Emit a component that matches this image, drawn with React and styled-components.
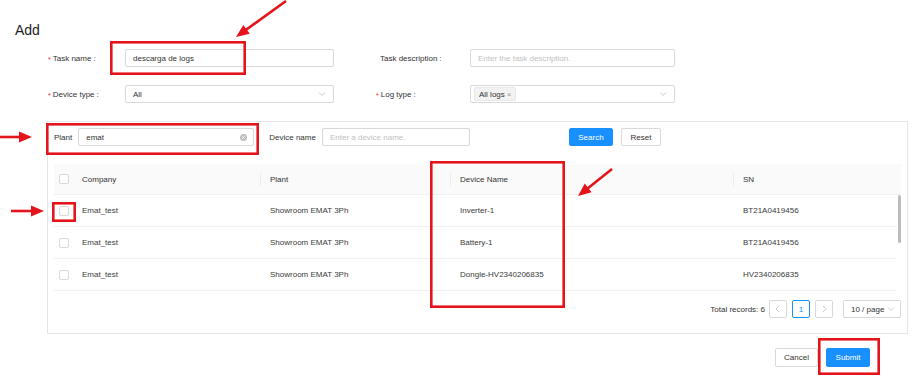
import styled, { createGlobalStyle } from "styled-components";

const GlobalStyle = createGlobalStyle`
  html, body {
    margin: 0;
    padding: 0;
    background: #fff;
  }
  body {
    font-family: "Liberation Sans", Arial, sans-serif;
    font-size: 8px;
    color: #333;
  }
  * {
    box-sizing: border-box;
  }
`;

const rows = [
  { company: "Emat_test", plant: "Showroom EMAT 3Ph", device: "Inverter-1", sn: "BT21A0419456" },
  { company: "Emat_test", plant: "Showroom EMAT 3Ph", device: "Battery-1", sn: "BT21A0419456" },
  { company: "Emat_test", plant: "Showroom EMAT 3Ph", device: "Dongle-HV2340206835", sn: "HV2340206835" },
];
const totalRecords = 6;

const Chevron = ({ dir = "down" }) => {
  const pts = {
    down: "1,1.5 4,4.5 7,1.5",
    left: "5,1 2,4 5,7",
    right: "3,1 6,4 3,7",
  }[dir];
  const box = dir === "down" ? "0 0 8 6" : "0 0 8 8";
  return (
    <svg width="8" height={dir === "down" ? 6 : 8} viewBox={box}>
      <polyline points={pts} fill="none" stroke="#bfbfbf" strokeWidth="0.8" />
    </svg>
  );
};

const ClearIcon = () => (
  <svg width="7" height="7" viewBox="0 0 14 14">
    <circle cx="7" cy="7" r="7" fill="#bfbfbf" />
    <path d="M4.5 4.5 L9.5 9.5 M9.5 4.5 L4.5 9.5" stroke="#fff" strokeWidth="1.6" />
  </svg>
);

function Arrow({ x1, y1, x2, y2 }) {
  const len = Math.hypot(x2 - x1, y2 - y1);
  const ux = (x2 - x1) / len;
  const uy = (y2 - y1) / len;
  const hl = 13;
  const hw = 5.5;
  const bx = x2 - ux * hl;
  const by = y2 - uy * hl;
  const head = `${x2},${y2} ${bx - uy * hw},${by + ux * hw} ${bx + uy * hw},${by - ux * hw}`;
  return (
    <g>
      <line x1={x1} y1={y1} x2={bx + ux * 2} y2={by + uy * 2} stroke="#e3141b" strokeWidth="2.6" />
      <polygon points={head} fill="#e3141b" />
    </g>
  );
}

function Mark({ x1, y1, x2, y2 }) {
  const s = 2.6;
  return (
    <rect
      x={x1 + s / 2}
      y={y1 + s / 2}
      width={x2 - x1 - s}
      height={y2 - y1 - s}
      fill="none"
      stroke="#e3141b"
      strokeWidth={s}
    />
  );
}

export default function App() {
  // visible share of the list, for the scroll thumb
  const thumb = (rows.length / totalRecords) * 100;

  return (
    <Page>
      <GlobalStyle />
      <Title>Add</Title>

      <Form>
        <FormRow>
          <FormItem>
            <Label $w={77} $required>
              Task name<Colon>:</Colon>
            </Label>
            <TextInput $w={209} value="descarga de logs" readOnly />
          </FormItem>
          <FormItem>
            <Label $w={94}>
              Task description<Colon>:</Colon>
            </Label>
            <TextInput $w={205} placeholder="Enter the task description." readOnly />
          </FormItem>
        </FormRow>
        <FormRow>
          <FormItem>
            <Label $w={77} $required>
              Device type<Colon>:</Colon>
            </Label>
            <Select $w={209}>
              <span>All</span>
              <Chevron />
            </Select>
          </FormItem>
          <FormItem>
            <Label $w={94} $required>
              Log type<Colon>:</Colon>
            </Label>
            <Select $w={205} $tight>
              <Tag>
                All logs <TagClose>×</TagClose>
              </Tag>
              <Chevron />
            </Select>
          </FormItem>
        </FormRow>
      </Form>

      <Panel>
        <FilterBar>
          <FilterLabel>Plant</FilterLabel>
          <FilterInputBox $w={176}>
            <span>emat</span>
            <ClearIcon />
          </FilterInputBox>
          <FilterLabel $gapLeft={15}>Device name</FilterLabel>
          <TextInput $w={148} placeholder="Enter a device name." readOnly />
          <Button $primary $w={44} $gapLeft={99}>
            Search
          </Button>
          <Button $w={40} $gapLeft={8}>
            Reset
          </Button>
        </FilterBar>

        <Table>
          <HeadRow>
            <Cell>
              <Checkbox />
            </Cell>
            <HeadCell>Company</HeadCell>
            <HeadCell $sep>Plant</HeadCell>
            <HeadCell $sep>Device Name</HeadCell>
            <HeadCell $sep>SN</HeadCell>
          </HeadRow>
          <Body>
            <RowList>
              {rows.map((r, i) => (
                <BodyRow key={i}>
                  <Cell>
                    <Checkbox />
                  </Cell>
                  <TextCell>{r.company}</TextCell>
                  <TextCell>{r.plant}</TextCell>
                  <TextCell>{r.device}</TextCell>
                  <TextCell>{r.sn}</TextCell>
                </BodyRow>
              ))}
            </RowList>
            <ScrollTrack>
              <ScrollThumb style={{ height: `${thumb}%` }} />
            </ScrollTrack>
          </Body>
        </Table>

        <Pager>
          <Total>Total records: {totalRecords}</Total>
          <PageBtn>
            <Chevron dir="left" />
          </PageBtn>
          <PageBtn $active>1</PageBtn>
          <PageBtn>
            <Chevron dir="right" />
          </PageBtn>
          <SizeSelect>
            <span>10 / page</span>
            <Chevron />
          </SizeSelect>
        </Pager>
      </Panel>

      <Footer>
        <Button $w={43} $h={19}>
          Cancel
        </Button>
        <Button $primary $w={44} $h={19} $gapLeft={8}>
          Submit
        </Button>
      </Footer>

      <Overlay width="921" height="387" viewBox="0 0 921 387">
        <Mark x1={110} y1={41} x2={246} y2={75} />
        <Mark x1={46} y1={123} x2={259} y2={155} />
        <Mark x1={52} y1={202} x2={76} y2={222} />
        <Mark x1={430} y1={161} x2={565} y2={308} />
        <Mark x1={818} y1={338} x2={880} y2={375} />
        <Arrow x1={286} y1={1} x2={236} y2={37} />
        <Arrow x1={0} y1={137} x2={32} y2={137} />
        <Arrow x1={11} y1={211} x2={44} y2={211} />
        <Arrow x1={612} y1={169} x2={578} y2={196} />
      </Overlay>
    </Page>
  );
}

const Page = styled.div`
  position: relative;
  width: 921px;
  height: 387px;
  overflow: hidden;
  padding-top: 22px;
`;

const Title = styled.div`
  margin-left: 15px;
  font-size: 14px;
  line-height: 16px;
  color: #222;
`;

const Form = styled.div`
  display: flex;
  flex-direction: column;
  gap: 18px;
  margin: 11px 0 0 48px;
`;

const FormRow = styled.div`
  display: flex;
  gap: 42px;
  height: 18px;
`;

const FormItem = styled.div`
  display: flex;
  align-items: center;
`;

const Label = styled.label`
  width: ${(p) => p.$w}px;
  font-size: 8px;
  color: #333;
  white-space: nowrap;
  padding-left: ${(p) => (p.$required ? 0 : 4)}px;
  &::before {
    content: ${(p) => (p.$required ? '"*"' : "none")};
    color: #f5222d;
    font-size: 7px;
    margin-right: 2px;
    position: relative;
    top: 1px;
  }
`;

const Colon = styled.span`
  margin-left: 2px;
`;

const TextInput = styled.input`
  width: ${(p) => p.$w}px;
  height: 18px;
  border: 1px solid #d9d9d9;
  border-radius: 2px;
  padding: 0 7px;
  font: inherit;
  font-size: 8px;
  color: #333;
  outline: none;
  background: #fff;
  &::placeholder {
    color: #bfbfbf;
  }
`;

const Select = styled.div`
  width: ${(p) => p.$w}px;
  height: 18px;
  border: 1px solid #d9d9d9;
  border-radius: 2px;
  padding: 0 7px 0 ${(p) => (p.$tight ? 3 : 7)}px;
  display: flex;
  align-items: center;
  justify-content: space-between;
  color: #333;
`;

const Tag = styled.span`
  display: inline-flex;
  align-items: center;
  height: 14px;
  padding: 0 4px;
  background: #f2f2f2;
  border: 1px solid #e8e8e8;
  border-radius: 2px;
  color: #333;
`;

const TagClose = styled.span`
  color: #999;
  margin-left: 2px;
  font-size: 8px;
`;

const Panel = styled.div`
  margin: 18px 13px 0 47px;
  border: 1px solid #e6e6e6;
  padding: 6px 6px 15px 6px;
`;

const FilterBar = styled.div`
  display: flex;
  align-items: center;
  height: 18px;
`;

const FilterLabel = styled.span`
  margin-left: ${(p) => p.$gapLeft || 0}px;
  margin-right: 6px;
  color: #333;
  white-space: nowrap;
`;

const FilterInputBox = styled.div`
  width: ${(p) => p.$w}px;
  height: 18px;
  border: 1px solid #d9d9d9;
  border-radius: 2px;
  padding: 0 6px 0 7px;
  display: flex;
  align-items: center;
  justify-content: space-between;
  color: #333;
`;

const Button = styled.div`
  width: ${(p) => p.$w}px;
  height: ${(p) => p.$h || 18}px;
  margin-left: ${(p) => p.$gapLeft || 0}px;
  display: flex;
  align-items: center;
  justify-content: center;
  border-radius: 2px;
  border: 1px solid ${(p) => (p.$primary ? "#1890ff" : "#d9d9d9")};
  background: ${(p) => (p.$primary ? "#1890ff" : "#fff")};
  color: ${(p) => (p.$primary ? "#fff" : "#333")};
`;

const Table = styled.div`
  margin-top: 18px;
`;

const cols = "18px 188px 190px 283px 1fr";

const HeadRow = styled.div`
  display: grid;
  grid-template-columns: ${cols};
  height: 31px;
  background: #fafafa;
  border-bottom: 1px solid #f0f0f0;
`;

const Cell = styled.div`
  display: flex;
  align-items: center;
  padding-left: 5px;
`;

const HeadCell = styled.div`
  position: relative;
  display: flex;
  align-items: center;
  padding-left: 10px;
  color: #333;
  &::before {
    content: ${(p) => (p.$sep ? '""' : "none")};
    position: absolute;
    left: 0;
    top: 9px;
    width: 1px;
    height: 13px;
    background: #ececec;
  }
`;

const Body = styled.div`
  display: flex;
  height: 96px;
`;

const RowList = styled.div`
  flex: 1;
  display: flex;
  flex-direction: column;
`;

const ScrollTrack = styled.div`
  width: 4px;
  display: flex;
  flex-direction: column;
`;

const ScrollThumb = styled.div`
  width: 3px;
  margin-left: 1px;
  background: #bcbcbc;
  border-radius: 2px;
`;

const BodyRow = styled.div`
  display: grid;
  grid-template-columns: ${cols};
  height: 32px;
  border-bottom: 1px solid #f0f0f0;
`;

const TextCell = styled.div`
  display: flex;
  align-items: center;
  padding-left: 10px;
  color: #3a3a3a;
  white-space: nowrap;
`;

const Checkbox = styled.span`
  width: 10px;
  height: 10px;
  border: 1px solid #d9d9d9;
  border-radius: 2px;
  background: #fff;
`;

const Pager = styled.div`
  display: flex;
  justify-content: flex-end;
  align-items: center;
  gap: 5px;
  height: 18px;
  margin-top: 9px;
`;

const Total = styled.span`
  color: #333;
  margin-right: -1px;
`;

const PageBtn = styled.div`
  width: 18px;
  height: 18px;
  display: flex;
  align-items: center;
  justify-content: center;
  border: 1px solid ${(p) => (p.$active ? "#1890ff" : "#d9d9d9")};
  border-radius: 2px;
  color: ${(p) => (p.$active ? "#1890ff" : "#bfbfbf")};
  background: #fff;
`;

const SizeSelect = styled.div`
  width: 58px;
  height: 18px;
  margin-left: 5px;
  border: 1px solid #d9d9d9;
  border-radius: 2px;
  padding: 0 5px 0 7px;
  display: flex;
  align-items: center;
  justify-content: space-between;
  color: #333;
`;

const Footer = styled.div`
  display: flex;
  justify-content: flex-end;
  margin-top: 14px;
  padding-right: 51px;
`;

const Overlay = styled.svg`
  position: absolute;
  top: 0;
  left: 0;
  pointer-events: none;
`;
